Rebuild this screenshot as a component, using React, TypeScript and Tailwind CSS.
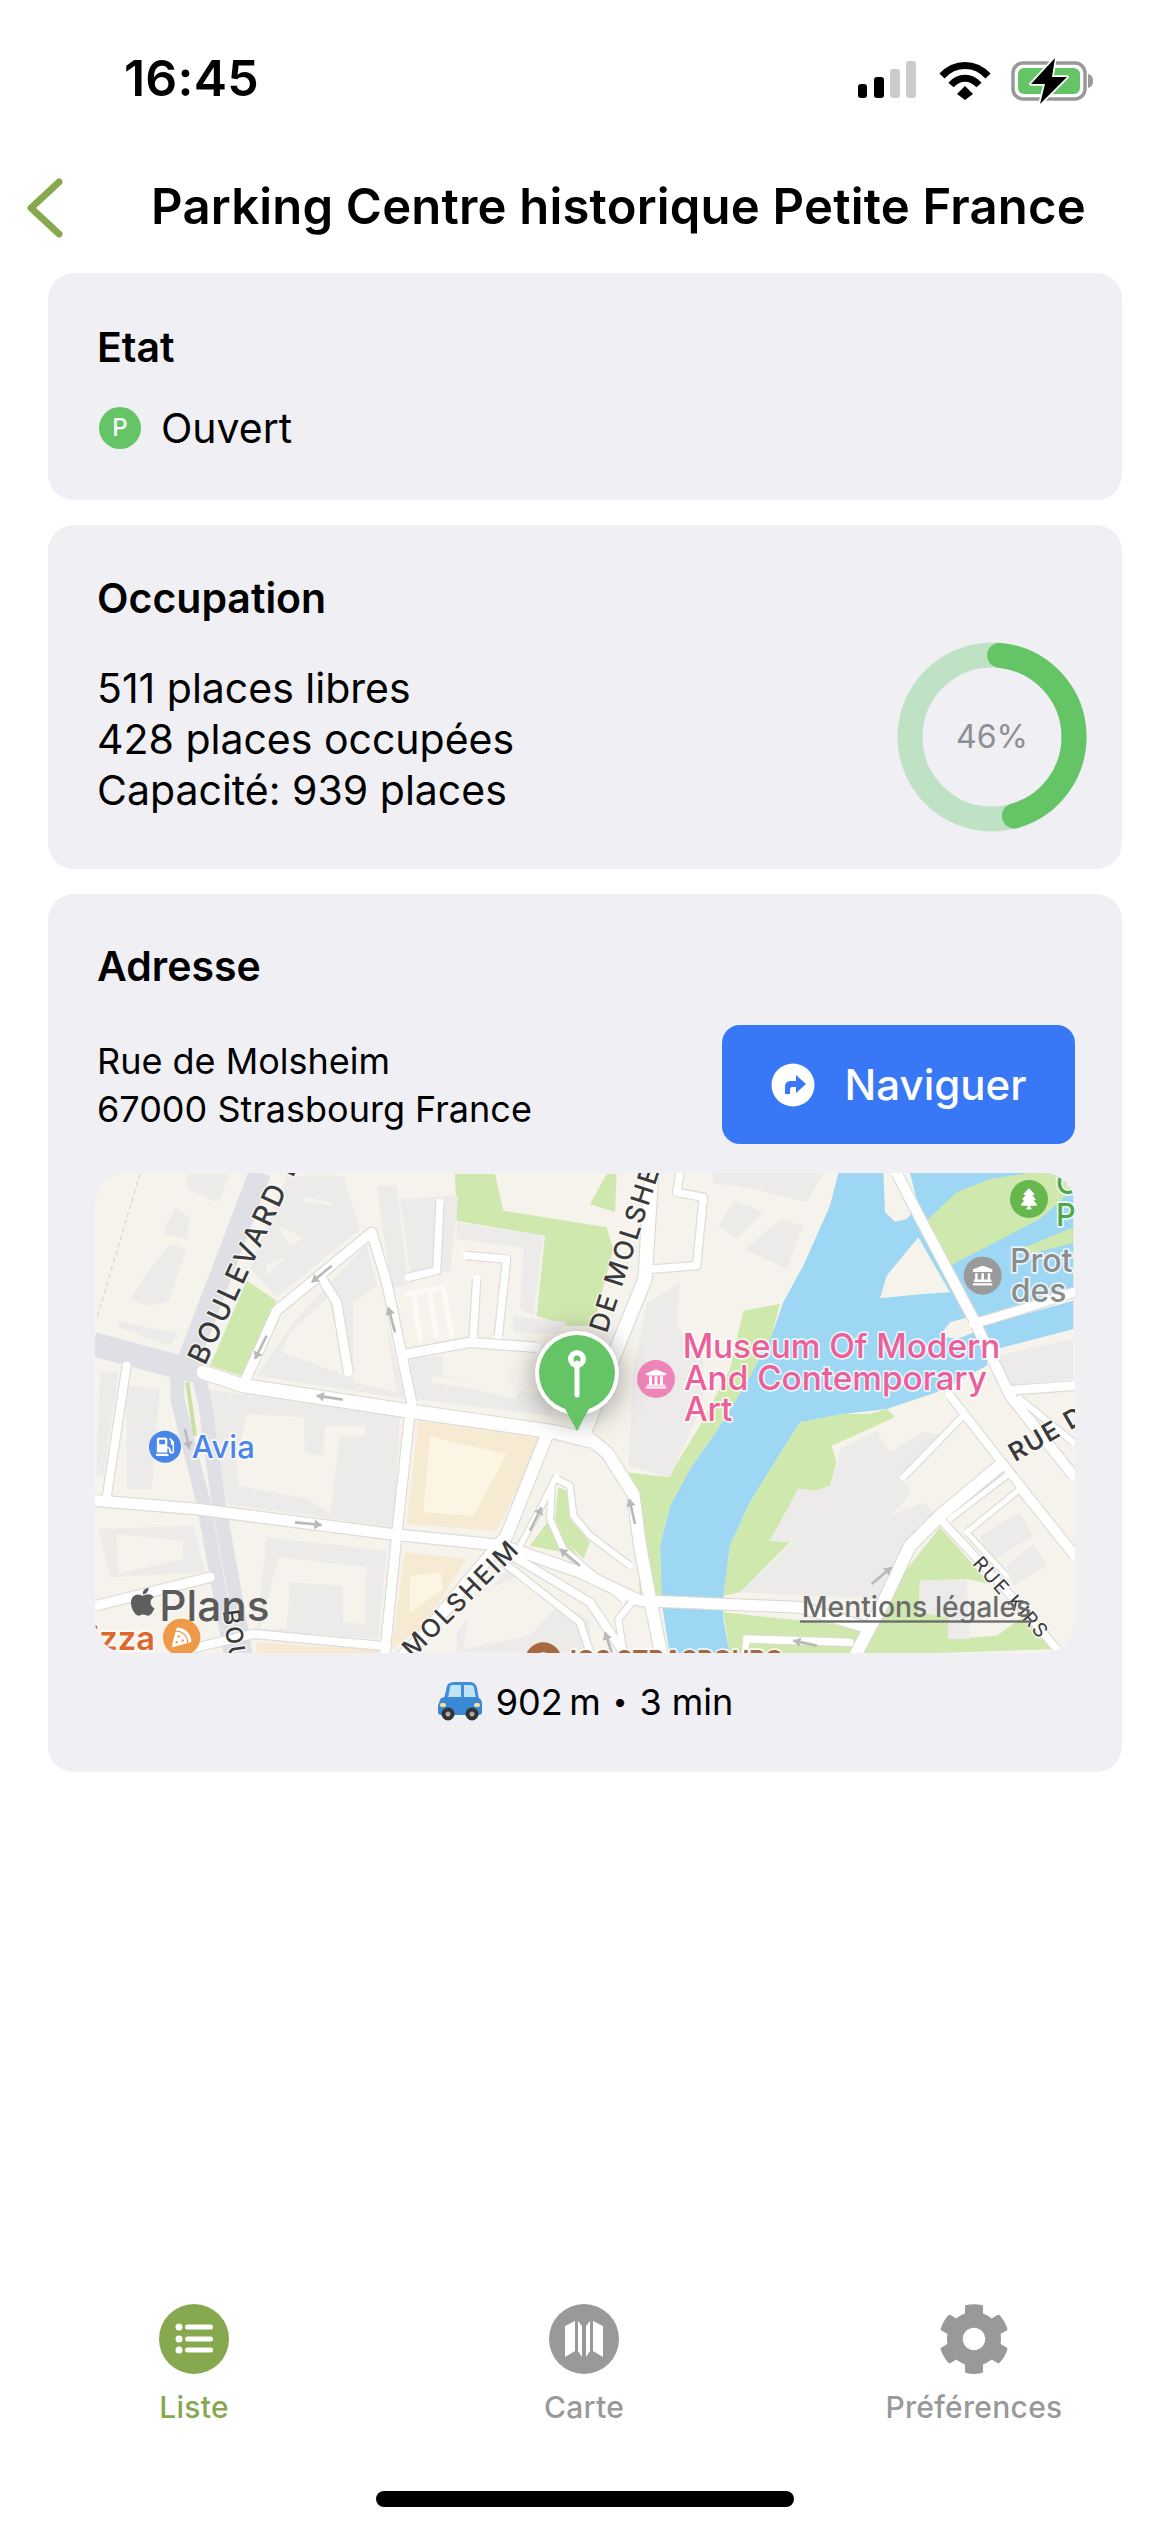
import React from "react";
import { FaApple, FaCog, FaGasPump, FaPizzaSlice, FaTree, FaLandmark, FaUniversity } from "react-icons/fa";

const GRAY = "#ecebe9";
const CREAM = "#f6f3ec";
const GREEN = "#cfe8ad";
const WATER = "#9dd7f3";

// all map coordinates are 3x the crop: left part, then right part shifted by 1500
const grayBlocks = [
  "290,15 420,15 385,100 290,60",
  "225,175 258,115 300,150 290,210 225,195",
  "240,225 290,240 235,400 170,410 120,390 180,300",
  "90,455 190,480 265,490 240,530 85,475",
  "30,610 85,610 40,920 18,920",
  "110,650 210,660 185,960 110,960",
  "345,660 930,745 910,1075 405,1005",
  "25,1080 310,1070 345,1210 60,1225",
  "530,1105 890,1145 865,1410 500,1385",
  "480,300 590,20 760,20 810,180 560,385",
  "500,620 610,460 830,225 945,690",
  "860,50 920,50 955,350 905,355",
  "930,90 1105,80 1080,310 960,310",
  "1100,160 1360,200 1330,440 1290,420 1300,235 1100,210",
  "1270,440 1430,460 1400,495 1270,490",
  "960,570 1060,560 1060,620 1150,640 1380,680 1390,740 975,690",
  "1250,1200 1390,1300 1500,1350 1500,1450 1100,1450 1100,1390",
];

const creamBlocks = [
  "470,735 640,745 645,850 700,860 705,770 825,770 825,800 750,800 720,1035 655,990 445,950 440,880",
  "80,1095 280,1115 280,1170 85,1215",
  "565,1165 830,1195 825,1365 760,1360 760,1250 600,1240 590,1380 510,1380",
  "600,490 715,385 770,620 575,550",
  "790,400 870,345 920,670 790,640",
  "565,170 640,205 600,235",
  "630,80 720,100 735,110 650,100",
  "530,285 590,265 530,315",
  "1030,620 1060,625 1150,640 1290,650 1280,690 1150,660 1020,640",
  "1140,1280 1290,1220 1400,1310 1320,1400 1120,1440",
];

const roads: [string, number][] = [
  ["M110,590 L50,985", 24],
  ["M18,1310 L360,1225", 28],
  ["M300,1440 L490,1395 L890,1432", 24],
  ["M960,730 L920,1100 L885,1450", 28],
  ["M18,995 L320,1020 L900,1095 L1240,1130 L1470,1210 L1650,1295 L2130,1315 L2330,1375", 32],
  ["M470,625 L560,425 L845,190 L890,340 L965,700", 28],
  ["M700,335 L740,400 L775,610", 26],
  ["M950,555 L1140,520 L1340,535", 28],
  ["M1130,260 L1250,270 L1225,500", 22],
  ["M1160,330 L1150,500", 22],
  ["M955,325 L1040,305 L1050,100", 22],
  ["M340,610 L460,650 L950,725 L1400,790 L1500,815", 40],
  ["M1685,10 L1665,330 L1580,540 L1480,800", 40],
  ["M1370,800 L1250,1100 L1000,1400 L930,1470", 36],
  ["M1500,810 L1550,850 L1630,975 L1650,1130 L1680,1290 L1715,1460", 36],
  ["M1400,920 L1350,1020 L1290,1130", 16],
  ["M1400,930 L1440,950 L1450,1040 L1500,1100 L1620,1190", 18],
  ["M1385,960 L1380,1050 L1420,1140 L1500,1210 L1600,1290", 18],
  ["M1250,1150 L1500,1300 L1600,1450", 24],
  ["M1240,1180 L1470,1360 L1500,1450", 20],
  ["M1770,12 L1760,70 L1840,85 L1820,290 L1690,300", 22],
  ["M1700,1295 L1630,1295 L1585,1350 L1600,1450", 18],
  ["M2420,12 L2460,90 L2650,450 L2760,680 L2950,920", 30],
  ["M2650,465 L2800,420 L2950,370", 26],
  ["M2750,665 L2950,650", 26],
  ["M2790,690 L2950,820", 18],
  ["M2580,680 L2720,860 L2950,1150", 24],
  ["M2620,740 L2440,925", 18],
  ["M2730,890 L2550,1040 L2460,1130 L2380,1300 L2300,1450", 36],
  ["M2750,920 L2580,1050", 16],
  ["M2790,960 L2630,1090", 16],
  ["M2560,1060 L2800,1320 L2900,1440", 22],
  ["M2630,1090 L2750,1220", 14],
  ["M2790,960 L2950,1160", 22],
  ["M1970,1410 L2280,1420", 22],
  ["M1970,1410 L1965,1450", 18],
];

const arrows: [number, number, number, number][] = [
  [725, 290, 665, 340],
  [530, 500, 495, 570],
  [915, 490, 895, 415],
  [758, 692, 680, 680],
  [615, 1060, 695, 1068],
  [1320, 1085, 1355, 1015],
  [1470, 1190, 1410, 1140],
  [285, 780, 298, 840],
  [1635, 1065, 1618, 990],
  [2345, 1245, 2405, 1195],
  [2180, 1430, 2110, 1415],
  [1565, 1450, 1545, 1390],
];

const MapLabel = ({ x, y, size, color, weight = 500, halo = "#ffffffcc", anchor = "start", children }: any) => (
  <text
    x={x}
    y={y}
    fontSize={size}
    fill={color}
    fontWeight={weight}
    textAnchor={anchor}
    stroke={halo}
    strokeWidth={10}
    paintOrder="stroke"
    strokeLinejoin="round"
  >
    {children}
  </text>
);

const StreetName = ({ x, y, angle, size, weight = 500, spacing = 5, children }: any) => (
  <text
    transform={`translate(${x} ${y}) rotate(${angle})`}
    fontSize={size}
    fill="#3a3a3a"
    fontWeight={weight}
    letterSpacing={spacing}
    stroke="#ffffffb0"
    strokeWidth={8}
    paintOrder="stroke"
    strokeLinejoin="round"
  >
    {children}
  </text>
);

const MapView = () => (
  <svg viewBox="0 0 980 480" className="block h-full w-full">
    <defs>
      <filter id="pinShadow" x="-60%" y="-60%" width="220%" height="220%">
        <feGaussianBlur stdDeviation="14" />
      </filter>
    </defs>
    <rect width="980" height="480" fill={CREAM} />
    <g transform="translate(-5 -4) scale(0.33333)">
      {/* water, then the land on top of it */}
      <path
        d="M2245,12 H2950 V480 L2700,545 L2690,590 L2540,670 L2390,720 L2260,735 L2130,760 L2060,870 L1980,1000 L1920,1130 L1900,1290 L1900,1350 L1920,1460 H1740 L1715,1300 L1710,1130 L1740,1010 L1800,900 L1890,770 L1970,640 L2045,500 L2080,400 L2140,290 L2220,110 Z"
        fill={WATER}
      />
      <polygon points="2380,12 2385,130 2415,158 2450,150 2485,110 2460,12" fill={CREAM} />
      <polygon points="2370,388 2390,320 2485,205 2580,370 2500,375" fill={CREAM} />
      <polygon points="2550,500 2580,460 2650,440 2680,480 2600,510" fill={CREAM} />
      <polygon points="2650,470 2800,420 2950,370 2950,395 2660,475" fill={CREAM} />
      <polygon points="2700,545 2950,485 2950,1460 2250,1460 2690,590" fill={CREAM} />
      <polygon points="2510,155 2600,70 2700,30 2820,12 2950,12 2950,60 2850,150 2580,290" fill={GREEN} />
      <polygon points="2780,245 2950,175 2950,222 2830,252" fill={GREEN} />
      <polygon points="2130,760 2260,735 2340,735 2390,720 2415,745 2225,830 2240,880 2220,950 2180,965 2125,960 2040,1115 2100,1120 1950,1270 1900,1280 1920,1130 1980,1000 2060,870" fill={GREEN} />
      <polygon points="1900,1330 2320,1375 2290,1460 1920,1460" fill={GREEN} />
      <polygon points="2550,1075 2700,1245 2630,1230 2490,1235 2485,1330 2575,1345 2575,1410 2720,1400 2820,1330 2900,1440 2300,1460 2380,1290" fill={GREEN} />
      <polygon points="1960,425 2070,405 2045,500 1970,640 1890,770 1800,900 1740,1010 1710,1130 1715,1280 1650,1280 1630,970 1610,910 1735,925 1830,770 1920,600" fill={GREEN} />
      <polygon points="1095,15 1215,15 1240,125 1550,175 1570,240 1510,470 1430,470 1340,440 1365,200 1100,155" fill={GREEN} />
      <polygon points="1550,15 1580,15 1575,130 1500,105" fill={GREEN} />
      <polygon points="470,335 560,395 455,620 360,590" fill={GREEN} />
      <polygon points="1380,1050 1320,1130 1420,1150 1500,1210" fill={GREEN} />
      <polygon points="1405,955 1430,965 1440,1050 1500,1120 1480,1170 1420,1110 1395,1050" fill={GREEN} />

      {/* yellow blocks */}
      <polygon points="985,755 1360,810 1220,1085 950,1065" fill="#f6ead2" />
      <polygon points="1020,800 1090,820 1250,855 1150,1040 1000,1030" fill="#fdf5e3" />
      <polygon points="945,1150 1130,1170 1000,1370 905,1440" fill="#f6ead2" />
      <polygon points="960,1220 1050,1210 1060,1260 960,1330" fill="#fdf5e3" />
      <polygon points="500,1420 890,1445 890,1460 500,1460" fill="#f6ead2" />

      {grayBlocks.map((p) => (
        <polygon key={p} points={p} fill={GRAY} />
      ))}
      {creamBlocks.map((p) => (
        <polygon key={p} points={p} fill={CREAM} />
      ))}
      <g fill={GRAY}>
        <polygon points="1670,405 1770,340 1760,470 1840,560 1840,700 1740,925 1615,890 1630,600" />
        <polygon points="1870,12 2200,12 2150,100 1950,50 1870,45" />
        <polygon points="1935,95 2020,130 1940,210 1885,170" />
        <polygon points="2075,150 2140,170 2090,300 1965,240" />
        <polygon points="2125,960 2180,965 2220,950 2245,880 2250,840 2360,785 2400,850 2495,790 2560,795 2430,925 2460,960 2450,990 2400,1040 2500,1000 2540,1040 2460,1130 2380,1290 1950,1270 2110,1120 2040,1115" />
        <polygon points="2670,1100 2790,1030 2830,1100 2700,1180" />
        <polygon points="2750,1190 2830,1125 2870,1190 2770,1250" />
        <polygon points="2720,560 2950,510 2950,630 2760,650" />
        <polygon points="2490,1235 2630,1230 2640,1410 2575,1410 2575,1345 2485,1330" />
      </g>

      {/* boulevard */}
      <g fill="none" stroke="#dfe0e6" strokeLinejoin="round">
        <path d="M510,10 L285,600" strokeWidth={66} />
        <path d="M10,525 L250,590 L335,610" strokeWidth={72} />
        <path d="M262,625 L262,690 L340,1000 L425,1470" strokeWidth={42} />
        <path d="M322,610 L345,700 L385,1000 L470,1470" strokeWidth={42} />
      </g>
      <path d="M292,640 L315,800" stroke="#c8dfa6" strokeWidth={12} fill="none" />
      <path d="M150,15 L20,450" stroke="#cfcfcb" strokeWidth={3} strokeDasharray="14 10" fill="none" />

      {/* road casing and then road */}
      <g fill="none" stroke="#dcdbd6" strokeLinejoin="round">
        {roads.map(([d, w]) => (
          <path key={d} d={d} strokeWidth={w + 7} />
        ))}
      </g>
      <g fill="none" stroke="#fff" strokeLinejoin="round" strokeLinecap="round">
        {roads.map(([d, w]) => (
          <path key={d} d={d} strokeWidth={w} />
        ))}
        <path d="M950,375 L1060,355 L1085,500 M970,375 L990,510 M1020,370 L1040,500" stroke="#fbfaf6" strokeWidth={16} />
      </g>

      {arrows.map(([x1, y1, x2, y2]) => {
        const a = Math.atan2(y2 - y1, x2 - x1);
        const l = 26;
        const p1 = `${x2 - l * Math.cos(a - 0.6)},${y2 - l * Math.sin(a - 0.6)}`;
        const p2 = `${x2 - l * Math.cos(a + 0.6)},${y2 - l * Math.sin(a + 0.6)}`;
        return (
          <g key={`${x1}-${y1}`}>
            <line x1={x1} y1={y1} x2={x2} y2={y2} stroke="#b9b9b9" strokeWidth={8} />
            <polygon points={`${x2},${y2} ${p1} ${p2}`} fill="#b9b9b9" />
          </g>
        );
      })}

      <StreetName x={345} y={592} angle={-65} size={86} spacing={8}>BOULEVARD D</StreetName>
      <StreetName x={1550} y={495} angle={-72} size={80} spacing={6}>DE MOLSHEIM</StreetName>
      <StreetName x={968} y={1470} angle={-45} size={76} spacing={6}>MOLSHEIM</StreetName>
      <StreetName x={398} y={1325} angle={82} size={70}>BOULEVARD</StreetName>
      <StreetName x={2775} y={880} angle={-30} size={76} weight={600}>RUE D</StreetName>
      <StreetName x={2645} y={1185} angle={48} size={58} weight={400} spacing={6}>RUE KIRS</StreetName>

      {/* points of interest */}
      <circle cx={225} cy={833} r={48} fill="#4a85e8" />
      <foreignObject x={197} y={805} width={56} height={56}>
        <FaGasPump color="#fff" size={56} />
      </foreignObject>
      <MapLabel x={305} y={868} size={93} color="#4a85e8">Avia</MapLabel>

      <circle cx={1698} cy={630} r={57} fill="#ee85b8" />
      <foreignObject x={1665} y={597} width={66} height={66}>
        <FaUniversity color="#fff" size={66} />
      </foreignObject>
      <MapLabel x={1778} y={568} size={100} color="#ec5f9b">Museum Of Modern</MapLabel>
      <MapLabel x={1782} y={662} size={100} color="#ec5f9b">And Contemporary</MapLabel>
      <MapLabel x={1782} y={757} size={100} color="#ec5f9b">Art</MapLabel>

      <circle cx={2678} cy={320} r={57} fill="#9a9a9a" />
      <foreignObject x={2648} y={290} width={60} height={60}>
        <FaLandmark color="#fff" size={60} />
      </foreignObject>
      <MapLabel x={2760} y={310} size={96} color="#8c8c8c">Prot</MapLabel>
      <MapLabel x={2762} y={400} size={96} color="#8c8c8c">des</MapLabel>

      <circle cx={2817} cy={90} r={57} fill="#66b84c" />
      <foreignObject x={2785} y={58} width={64} height={64}>
        <FaTree color="#fff" size={64} />
      </foreignObject>
      <MapLabel x={2898} y={76} size={92} color="#4ea84a">G</MapLabel>
      <MapLabel x={2898} y={172} size={92} color="#4ea84a">P</MapLabel>

      <MapLabel x={195} y={1442} size={98} color="#e0672c" weight={600} anchor="end">Pizza</MapLabel>
      <circle cx={275} cy={1405} r={56} fill="#ef9a4a" />
      <foreignObject x={245} y={1375} width={60} height={60}>
        <FaPizzaSlice color="#fff" size={60} />
      </foreignObject>

      <circle cx={1360} cy={1475} r={55} fill="#a8683f" />
      <circle cx={1360} cy={1480} r={30} fill="#f6f3ec" />
      <MapLabel x={1440} y={1497} size={72} color="#a8683f" weight={700}>IOS STRASBOURG</MapLabel>

      {/* legal and logo */}
      <foreignObject x={110} y={1250} width={96} height={110}>
        <FaApple color="#5e5e5e" size={96} />
      </foreignObject>
      <text x={208} y={1355} fontSize={127} fill="#5a5a5a" fontWeight={500}>Plans</text>
      <text x={2135} y={1345} fontSize={85} fill="#6b6b6b" fontWeight={500}>Mentions légales</text>
      <rect x={2130} y={1354} width={700} height={7} fill="#6b6b6b" />
    </g>

    {/* parking pin */}
    <circle cx="482" cy="204" r="44" fill="#00000055" filter="url(#pinShadow)" />
    <circle cx="482" cy="200" r="42" fill="#fff" />
    <circle cx="482" cy="200" r="38" fill="#65c466" />
    <polygon points="468,232 496,232 482,258" fill="#65c466" />
    <circle cx="482" cy="186" r="9" fill="#fff" />
    <circle cx="482" cy="186" r="3.5" fill="#65c466" />
    <path d="M482,190 V222" stroke="#fff" strokeWidth="5" strokeLinecap="round" />
  </svg>
);

const Signal = () => (
  <svg width="60" height="40" viewBox="0 0 60 40">
    <rect x="0" y="23" width="9" height="14" rx="3" fill="#000" />
    <rect x="16" y="16" width="10" height="21" rx="3" fill="#000" />
    <rect x="32" y="8" width="10" height="29" rx="3" fill="#ccc" />
    <rect x="48" y="0" width="10" height="37" rx="3" fill="#ccc" />
  </svg>
);

const Wifi = () => (
  <svg width="52" height="40" viewBox="0 0 52 40" fill="none" stroke="#000" strokeWidth="7">
    <path d="M3,15 C16,1 36,1 49,15" />
    <path d="M12,24 C20,15 32,15 40,24" />
    <path d="M18,33 L26,25 L34,33 L26,39 Z" fill="#000" stroke="none" />
  </svg>
);

const Battery = () => (
  <svg width="84" height="48" viewBox="0 0 84 48">
    <rect x="2" y="6" width="72" height="36" rx="10" fill="none" stroke="#999" strokeWidth="3.5" />
    <rect x="7" y="11" width="62" height="26" rx="6" fill="#65c466" />
    <path d="M77,17 C81,18 82,21 82,24 C82,27 81,30 77,31 Z" fill="#999" />
    <path
      d="M44,1 L20,27 L34,27 L29,47 L56,20 L41,20 Z"
      fill="#000"
      stroke="#fff"
      strokeWidth="3.5"
      strokeLinejoin="round"
      paintOrder="stroke"
    />
  </svg>
);

const Card = ({ title, className, children }: any) => (
  <section className={`rounded-[26px] bg-[#efeff4] px-[49px] ${className}`}>
    <h2 className="text-[41px] leading-[46px] font-semibold text-black">{title}</h2>
    {children}
  </section>
);

const Donut = () => {
  const r = 82;
  const c = 2 * Math.PI * r;
  return (
    <div className="relative h-[190px] w-[190px]">
      <svg width="190" height="190" viewBox="0 0 190 190" className="-rotate-90">
        <circle cx="95" cy="95" r={r} fill="none" stroke="#bfe2c4" strokeWidth="25" />
        <circle
          cx="95"
          cy="95"
          r={r}
          fill="none"
          stroke="#65c466"
          strokeWidth="25"
          strokeLinecap="round"
          strokeDasharray={`${c * 0.44} ${c}`}
          strokeDashoffset={-c * 0.015}
        />
      </svg>
      <div className="absolute inset-0 flex items-center justify-center text-[32px] text-[#8e8e93]">46%</div>
    </div>
  );
};

const CarIcon = () => (
  <svg width="46" height="40" viewBox="0 0 46 40">
    <path d="M10,4 C11,1 14,0 18,0 H32 C37,0 39,2 40,6 L42,17 H7 Z" fill="#3f8fd8" />
    <path d="M13,5 C13,3 15,3 17,3 H24 V16 H11 Z M27,3 H33 C36,3 37,4 37,6 L39,16 H27 Z" fill="#bfe3f7" />
    <path d="M3,18 C4,15 7,15 10,15 H38 C42,15 45,17 45,22 V30 C45,32 44,33 42,33 H4 C2,33 1,32 1,30 V24 Z" fill="#3b89d6" />
    <circle cx="11" cy="32" r="6.5" fill="#333" />
    <circle cx="35" cy="32" r="6.5" fill="#333" />
    <circle cx="11" cy="32" r="2.5" fill="#aaa" />
    <circle cx="35" cy="32" r="2.5" fill="#aaa" />
    <rect x="3" y="21" width="6" height="4" rx="2" fill="#ffe08a" />
    <rect x="37" y="21" width="6" height="4" rx="2" fill="#ffe08a" />
  </svg>
);

const TabItem = ({ label, active, children }: any) => (
  <div className="flex w-[260px] flex-col items-center">
    <div className="flex h-[72px] items-center justify-center">{children}</div>
    <span
      className={`mt-[14px] text-[30px] leading-[36px] font-medium tracking-[0.3px] ${active ? "text-[#86a94f]" : "text-[#999999]"}`}
    >
      {label}
    </span>
  </div>
);

export default function App() {
  return (
    <div className="flex h-[2532px] w-[1170px] flex-col overflow-hidden bg-white font-[Inter,sans-serif] text-black">
      {/* status bar */}
      <div className="flex h-[152px] items-start justify-between pt-[50px] pr-[75px] pl-[124px]">
        <span className="text-[50px] leading-[56px] font-semibold tracking-[0.2px]">16:45</span>
        <div className="flex items-center pt-[7px]">
          <Signal />
          <div className="ml-[21px]"><Wifi /></div>
          <div className="ml-[20px]"><Battery /></div>
        </div>
      </div>

      {/* header */}
      <div className="flex h-[121px] items-start pt-[26px] pl-[24px]">
        <svg width="40" height="60" viewBox="0 0 40 60" fill="none" stroke="#86a94f" strokeWidth="7" strokeLinecap="round" strokeLinejoin="round">
          <path d="M35,4 L7,30 L35,56" />
        </svg>
        <h1 className="ml-[87px] text-[49px] leading-[58px] font-semibold tracking-[0.2px] whitespace-nowrap">
          Parking Centre historique Petite France
        </h1>
      </div>

      <main className="flex flex-1 flex-col gap-[25px] px-[48px]">
        <Card title="Etat" className="h-[227px] pt-[51px]">
          <div className="mt-[33px] flex items-center">
            <span className="ml-[2px] flex h-[42px] w-[42px] items-center justify-center rounded-full bg-[#65c466] text-[24px] font-medium text-white">
              P
            </span>
            <span className="ml-[20px] text-[41px] leading-[50px]">Ouvert</span>
          </div>
        </Card>

        <Card title="Occupation" className="h-[344px] pt-[50px]">
          <div className="mt-[21px] flex items-center justify-between">
            <div className="pt-[5px] text-[41px] leading-[51px]">
              <p>511 places libres</p>
              <p>428 places occupées</p>
              <p>Capacité: 939 places</p>
            </div>
            <div className="-mr-[14px]"><Donut /></div>
          </div>
        </Card>

        <Card title="Adresse" className="h-[878px] pt-[49px]">
          <div className="mt-[36px] flex items-center justify-between">
            <div className="text-[36px] leading-[48px]">
              <p>Rue de Molsheim</p>
              <p>67000 Strasbourg France</p>
            </div>
            <button className="-mr-[2px] flex h-[119px] w-[353px] items-center justify-center rounded-[18px] bg-[#3878f6] text-[42px] font-medium text-white">
              <svg width="44" height="44" viewBox="0 0 44 44">
                <circle cx="22" cy="22" r="21.5" fill="#fff" />
                <path d="M14,31 V24 C14,20 16,18 20,18 H25 V12 L35,21 L25,30 V24 H21 C20,24 19,25 19,26 V31 Z" fill="#3878f6" />
              </svg>
              <span className="ml-[30px]">Naviguer</span>
            </button>
          </div>
          <div className="-mx-[2px] mt-[29px] h-[480px] overflow-hidden rounded-[32px]">
            <MapView />
          </div>
          <div className="mt-[27px] flex items-center justify-center text-[36px] leading-[44px]">
            <CarIcon />
            <span className="ml-[13px]">902&#8201;m</span>
            <span className="mx-[12px] text-[26px]">•</span>
            <span>3 min</span>
          </div>
        </Card>
      </main>

      {/* tab bar */}
      <nav className="flex justify-between pr-[66px] pl-[64px]">
        <TabItem label="Liste" active>
          <svg width="70" height="70" viewBox="0 0 70 70">
            <circle cx="35" cy="35" r="35" fill="#86a94f" />
            <g fill="#fff">
              <circle cx="20" cy="23" r="3.5" />
              <circle cx="20" cy="35" r="3.5" />
              <circle cx="20" cy="46" r="3.5" />
              <rect x="26" y="20.5" width="28" height="5" rx="2.5" />
              <rect x="26" y="32.5" width="28" height="5" rx="2.5" />
              <rect x="26" y="43.5" width="28" height="5" rx="2.5" />
            </g>
          </svg>
        </TabItem>
        <TabItem label="Carte">
          <svg width="70" height="70" viewBox="0 0 70 70">
            <circle cx="35" cy="35" r="35" fill="#999999" />
            <path d="M16,22 L26,17 V47 L16,53 Z M29,17 L33,22 V53 L29,47 Z M37,22 L41,17 V47 L37,53 Z M44,17 L54,22 V53 L44,47 Z" fill="#fff" />
          </svg>
        </TabItem>
        <TabItem label="Préférences">
          <FaCog size={72} color="#999999" />
        </TabItem>
      </nav>

      {/* home indicator */}
      <div className="mt-[66px] mb-[25px] flex justify-center">
        <div className="h-[16px] w-[418px] rounded-full bg-black" />
      </div>
    </div>
  );
}
